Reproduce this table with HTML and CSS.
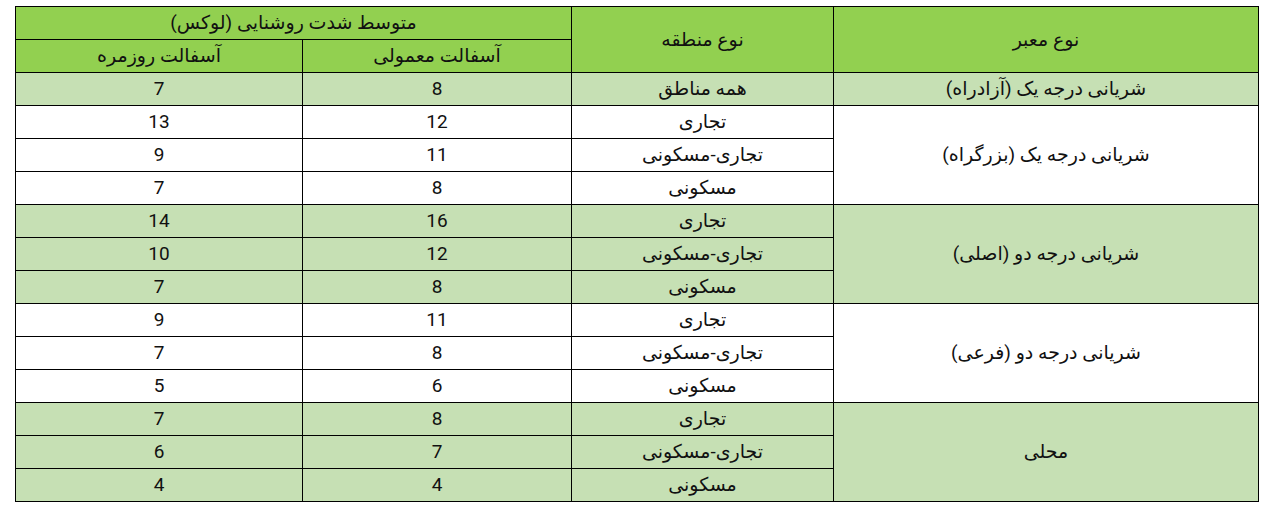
FILE: index.html
```html
<!DOCTYPE html>
<html lang="fa" dir="rtl">
<head>
<meta charset="utf-8">
<title>جدول روشنایی معابر</title>
<link rel="stylesheet" href="styles.css">
</head>
<body>
<div class="wrap">
<table class="lux">
  <colgroup>
    <col class="c-road">
    <col class="c-zone">
    <col class="c-normal">
    <col class="c-daily">
  </colgroup>
  <thead>
    <tr>
      <th rowspan="2">نوع معبر</th>
      <th rowspan="2">نوع منطقه</th>
      <th colspan="2">متوسط شدت روشنایی (لوکس)</th>
    </tr>
    <tr>
      <th>آسفالت معمولی</th>
      <th>آسفالت روزمره</th>
    </tr>
  </thead>
  <tbody class="g">
    <tr><td>شریانی درجه یک (آزادراه)</td><td>همه مناطق</td><td class="n">8</td><td class="n">7</td></tr>
  </tbody>
  <tbody class="w">
    <tr><td rowspan="3">شریانی درجه یک (بزرگراه)</td><td>تجاری</td><td class="n">12</td><td class="n">13</td></tr>
    <tr><td>تجاری-مسکونی</td><td class="n">11</td><td class="n">9</td></tr>
    <tr><td>مسکونی</td><td class="n">8</td><td class="n">7</td></tr>
  </tbody>
  <tbody class="g">
    <tr><td rowspan="3">شریانی درجه دو (اصلی)</td><td>تجاری</td><td class="n">16</td><td class="n">14</td></tr>
    <tr><td>تجاری-مسکونی</td><td class="n">12</td><td class="n">10</td></tr>
    <tr><td>مسکونی</td><td class="n">8</td><td class="n">7</td></tr>
  </tbody>
  <tbody class="w">
    <tr><td rowspan="3">شریانی درجه دو (فرعی)</td><td>تجاری</td><td class="n">11</td><td class="n">9</td></tr>
    <tr><td>تجاری-مسکونی</td><td class="n">8</td><td class="n">7</td></tr>
    <tr><td>مسکونی</td><td class="n">6</td><td class="n">5</td></tr>
  </tbody>
  <tbody class="g">
    <tr><td rowspan="3">محلی</td><td>تجاری</td><td class="n">8</td><td class="n">7</td></tr>
    <tr><td>تجاری-مسکونی</td><td class="n">7</td><td class="n">6</td></tr>
    <tr><td>مسکونی</td><td class="n">4</td><td class="n">4</td></tr>
  </tbody>
</table>
</div>
</body>
</html>
```
FILE: styles.css
```css
html, body {
  margin: 0;
  padding: 0;
  background: #ffffff;
}
.wrap {
  padding: 6px 20px 0 17px;
}
.lux {
  width: 1243px;
  border-collapse: collapse;
  table-layout: fixed;
  font-family: Roboto, "DejaVu Sans", sans-serif;
  font-size: 19px;
  color: #111;
}
.c-road { width: 425px; }
.c-zone { width: 262px; }
.c-normal { width: 269px; }
.c-daily { width: 287px; }
.lux th, .lux td {
  border: 1px solid #000;
  padding: 0;
  text-align: center;
  vertical-align: middle;
  font-weight: normal;
  height: 32px;
  line-height: 20px;
}
.lux td.n {
  font-size: 19px;
}
.lux th {
  background: #92d050;
}
.g td {
  background: #c6e0b4;
}
.w td {
  background: #ffffff;
}
```
